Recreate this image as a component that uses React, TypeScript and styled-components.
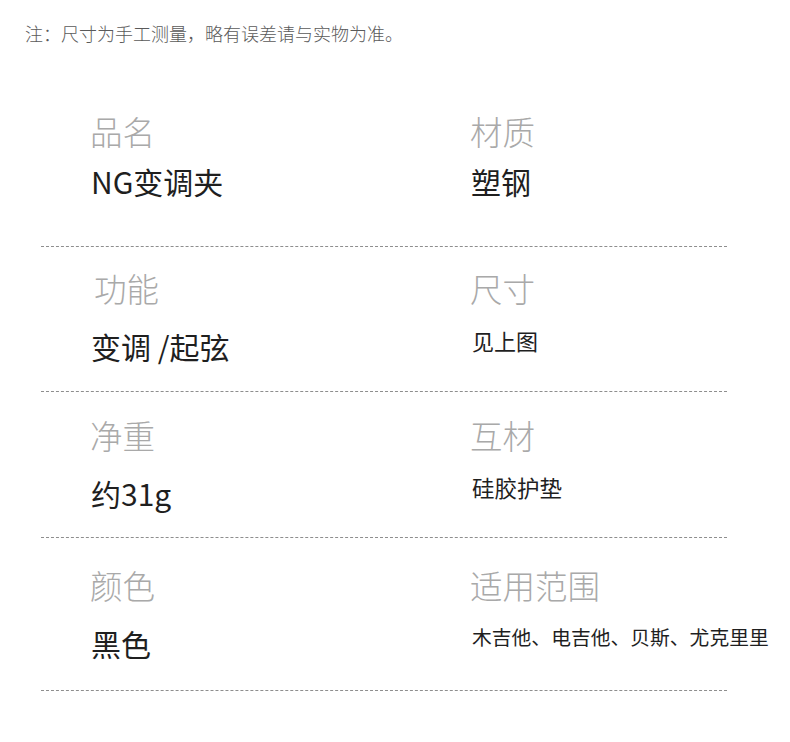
import React from 'react';
import styled, { createGlobalStyle } from 'styled-components';

type Spec = {
  label: string;
  value: string;
  size?: number;
  indent?: number;
};

type RowData = {
  id: string;
  top: number;
  gap: number;
  bottom: number;
  cells: [Spec, Spec];
};

const rows: RowData[] = [
  {
    id: 'name',
    top: 66,
    gap: 10,
    bottom: 45,
    cells: [
      { label: '品名', value: 'NG变调夹' },
      { label: '材质', value: '塑钢' },
    ],
  },
  {
    id: 'func',
    top: 21,
    gap: 18,
    bottom: 25,
    cells: [
      { label: '功能', value: '变调 /起弦', indent: 4 },
      { label: '尺寸', value: '见上图', size: 22 },
    ],
  },
  {
    id: 'weight',
    top: 23,
    gap: 18,
    bottom: 24,
    cells: [
      { label: '净重', value: '约31g' },
      { label: '互材', value: '硅胶护垫', size: 22.5 },
    ],
  },
  {
    id: 'color',
    top: 27,
    gap: 18,
    bottom: 27,
    cells: [
      { label: '颜色', value: '黑色' },
      { label: '适用范围', value: '木吉他、电吉他、贝斯、尤克里里', size: 19.8 },
    ],
  },
];

function App() {
  return (
    <>
      <GlobalStyle />
      <Page>
        <Note>注：尺寸为手工测量，略有误差请与实物为准。</Note>
        <SpecTable>
          {rows.map((row) => (
            <Row key={row.id} $top={row.top} $bottom={row.bottom}>
              {row.cells.map((cell) => (
                <Cell key={cell.label} $gap={row.gap}>
                  <Label $indent={cell.indent ?? 0}>{cell.label}</Label>
                  <Value $size={cell.size}>{cell.value}</Value>
                </Cell>
              ))}
            </Row>
          ))}
        </SpecTable>
      </Page>
    </>
  );
}

export default App;

const GlobalStyle = createGlobalStyle`
  html, body {
    margin: 0;
    padding: 0;
    background: #fff;
  }

  body {
    font-family: "Noto Sans CJK SC", "Noto Sans", sans-serif;
  }
`;

const Page = styled.div`
  width: 790px;
  height: 742px;
  background: #fff;
  overflow: hidden;
`;

const Note = styled.p`
  margin: 0;
  padding: 21px 0 0 25px;
  font-size: 18px;
  line-height: 24px;
  color: #5a5a5a;
  font-weight: 300;
  white-space: nowrap;
`;

const SpecTable = styled.div`
  margin-left: 41px;
  width: 686px;
`;

const Row = styled.div<{ $top: number; $bottom: number }>`
  display: grid;
  grid-template-columns: 380px 1fr;
  padding: ${({ $top }) => $top}px 0 ${({ $bottom }) => $bottom}px 49px;
  border-bottom: 1px dashed #8e8e8e;
`;

const Cell = styled.div<{ $gap: number }>`
  display: flex;
  flex-direction: column;
  gap: ${({ $gap }) => $gap}px;
  white-space: nowrap;
`;

const Label = styled.div<{ $indent: number }>`
  padding-left: ${({ $indent }) => $indent}px;
  font-size: 32.5px;
  line-height: 40px;
  color: #a9a9a9;
  font-weight: 300;
`;

const Value = styled.div<{ $size?: number }>`
  height: 40px;
  font-size: ${({ $size }) => ($size ? `${$size}px` : '30px')};
  line-height: ${({ $size }) => ($size ? '28px' : '40px')};
  color: #1f1f1f;
  padding-left: ${({ $size }) => ($size ? '2px' : '1px')};
`;
